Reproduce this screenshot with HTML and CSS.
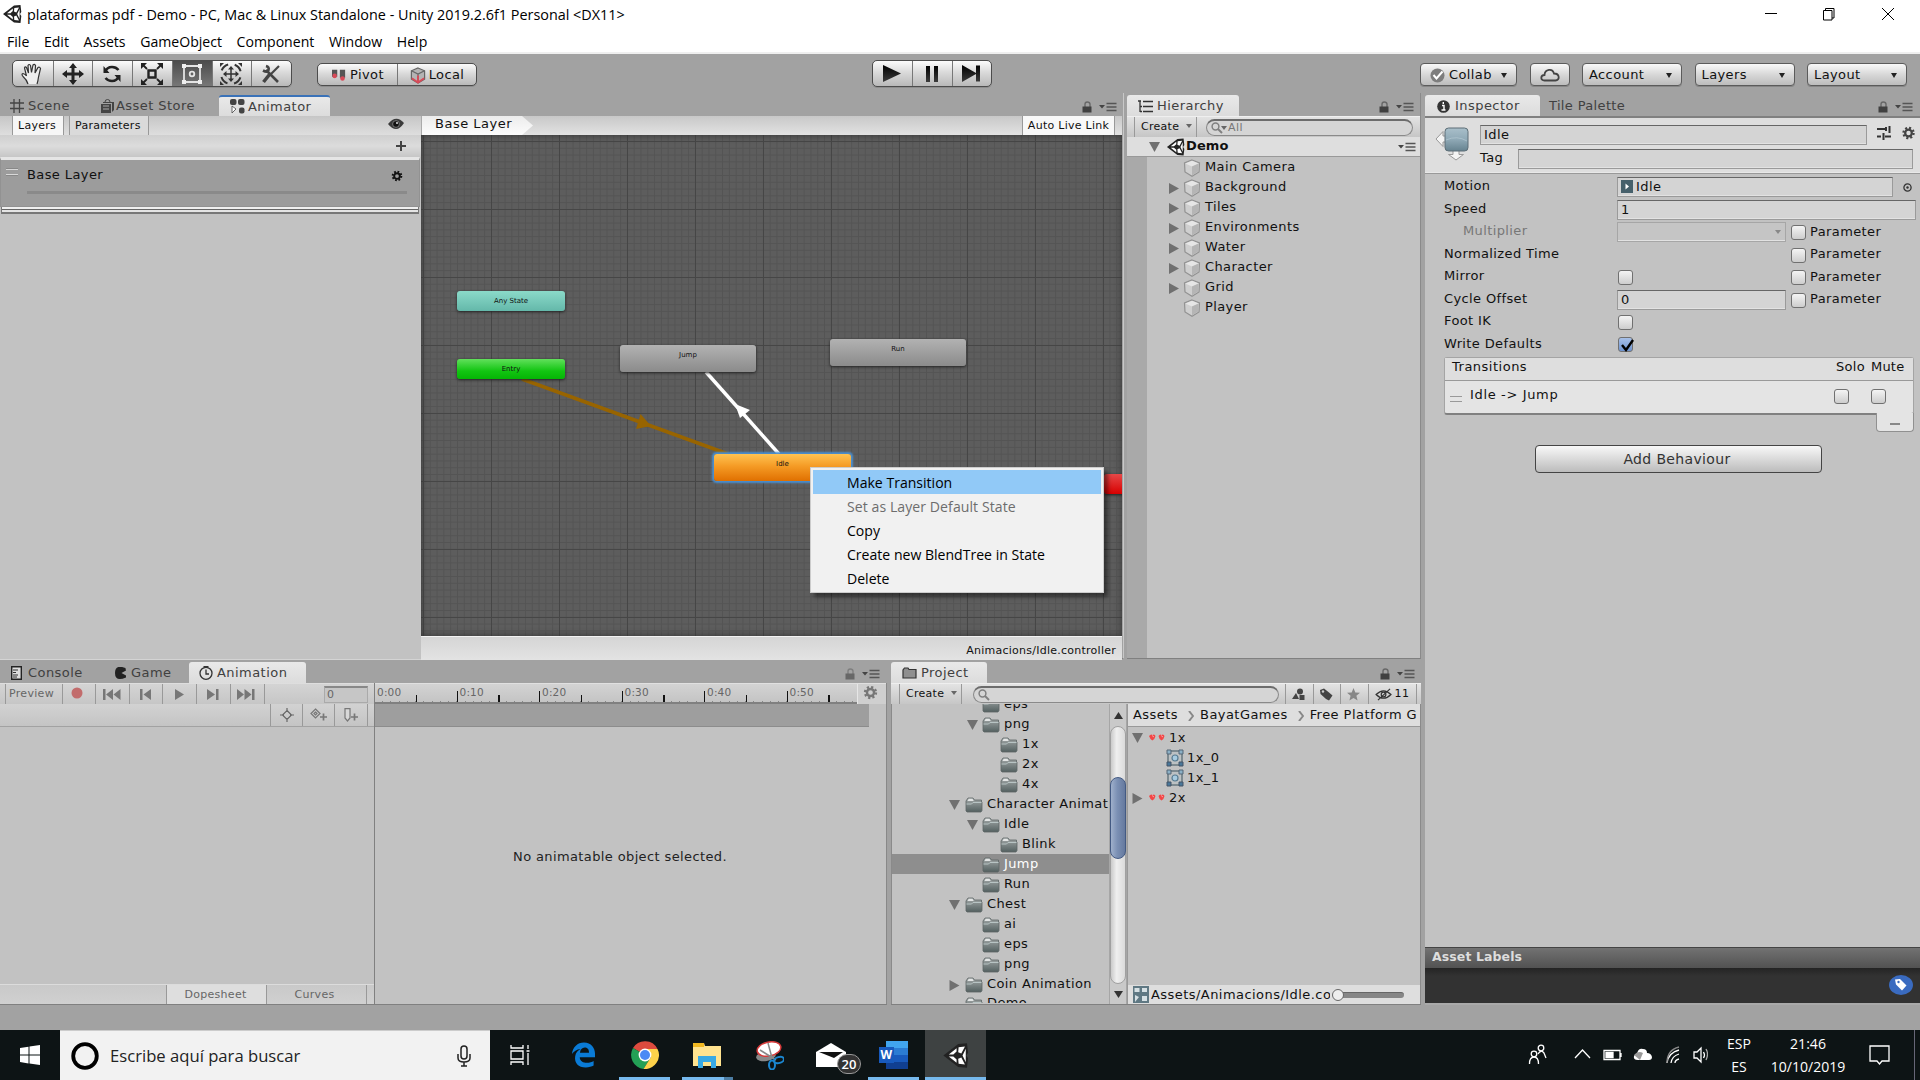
FILE: index.html
```html
<!DOCTYPE html>
<html lang="es">
<head>
<meta charset="utf-8">
<title>Unity</title>
<link rel="stylesheet" href="styles.css">
</head>
<body>
<svg class="defs" width="0" height="0">
  <defs>
    <linearGradient id="gFolder" x1="0" y1="0" x2="0" y2="1"><stop offset="0" stop-color="#a4a9a9"/><stop offset="1" stop-color="#536060"/></linearGradient>
    <linearGradient id="gState" x1="0" y1="0" x2="0" y2="1"><stop offset="0" stop-color="#a9bfca"/><stop offset=".5" stop-color="#8fa9b6"/><stop offset="1" stop-color="#66828f"/></linearGradient>
    <linearGradient id="gPlay" x1="0" y1="0" x2="0" y2="1"><stop offset="0" stop-color="#000"/><stop offset="1" stop-color="#3c3c3c"/></linearGradient>
  </defs>
  <symbol id="unity" viewBox="0 0 20 20"><path d="M1 10 12 1.5 18.5 1 19.3 8 18 10 19.3 12 18.5 19 12 18.5Z" fill="#222"/><path d="M5 9.2 10.8 4.6V7L8.4 9.2ZM5 10.8 10.8 15.4V13L8.4 10.8ZM12.3 3.9 17 3.4 14.3 8.6 12 7.6ZM12.3 16.1 17 16.6 14.3 11.4 12 12.4ZM17.6 5 15.2 10 17.6 15Z" fill="#fff"/></symbol>
  <symbol id="lock" viewBox="0 0 10 12"><path d="M3 6V3.2C3 1.8 3.9 1 5.2 1S8 1.8 8 3.2V6" fill="none" stroke="#686868" stroke-width="1.4"/><rect x=".5" y="5.5" width="9" height="6" fill="#404040"/></symbol>
  <symbol id="opts" viewBox="0 0 18 10"><path d="M0 3h6L3 6.5Z" fill="#444"/><path d="M7.5 1.5h10M7.5 5h10M7.5 8.5h10" stroke="#555" stroke-width="1.6"/></symbol>
  <symbol id="cube" viewBox="0 0 18 18"><path d="M9 1 16.5 4 16 13 9 17.3 2 13 1.5 4Z" fill="#cfcfcf" stroke="#929292" stroke-width="1.2"/><path d="M9 1.8 15.6 4.5 9 7.5 2.4 4.5Z" fill="#e6e6e6"/><path d="M9 7.5 15.6 4.5 15.2 12.5 9 16.5Z" fill="#b5b5b5"/></symbol>
  <symbol id="folder" viewBox="0 0 18 16"><path d="M1 14V4L3 1h5l1.5 2H16.5v2H17v8.5l-1 1.5H2Z" fill="url(#gFolder)" stroke="#5d6666" stroke-width=".8"/><path d="M2.5 4 3.7 1.8h3.8L8.7 4Z" fill="#e3e5e5"/><path d="M1.5 7h5L8 5.5h8.5" fill="none" stroke="#b8c4c4" stroke-width="1"/></symbol>
  <symbol id="down" viewBox="0 0 11 10"><path d="M0 0h11L5.5 10Z" fill="#707070"/></symbol>
  <symbol id="right" viewBox="0 0 10 11"><path d="M0 0v11L10 5.5Z" fill="#707070"/></symbol>
  <symbol id="sprite" viewBox="0 0 18 18"><rect x="2" y="2" width="14" height="14" fill="#bcc1c3" stroke="#7d8a90" stroke-width="2"/><path d="M1 1h4v4H1ZM13 1h4v4h-4Z" fill="#8bb0c6" stroke="#567"/><path d="M1 13h4v4H1ZM13 13h4v4h-4Z" fill="#48779a" stroke="#456"/><circle cx="9" cy="9" r="3" fill="#a7cbe0" stroke="#587c92" stroke-width="1.2"/></symbol>
  <symbol id="hearts" viewBox="0 0 16 8"><path d="M0 2Q2-.5 3.5 1 5.5-.5 6.5 2 6 5 3.3 6.500 1 5 0 2ZM9.500 2Q11-.5 12.5 1 14.5-.5 15.500 2 15 5 12.500 6.500 10 5 9.500 2Z" fill="#f24747"/><path d="M3 1.5 5 3M12 1.5 14 3" stroke="#ff9c9c"/></symbol>
  <symbol id="gear" viewBox="0 0 16 16"><circle cx="8" cy="8" r="5.8" fill="none" stroke="currentColor" stroke-width="2.6" stroke-dasharray="2.3 2.25"/><circle cx="8" cy="8" r="3.8" fill="none" stroke="currentColor" stroke-width="2.6"/></symbol>
  <symbol id="search" viewBox="0 0 12 12"><circle cx="4.5" cy="4.5" r="3.4" fill="none" stroke="#808080" stroke-width="1.5"/><path d="m7 7 4 4" stroke="#808080" stroke-width="2"/></symbol>
</svg>

<header class="titlebar">
  <svg class="app" width="20" height="20"><use href="#unity"/></svg>
  <span class="title">plataformas pdf - Demo - PC, Mac &amp; Linux Standalone - Unity 2019.2.6f1 Personal &lt;DX11&gt;</span>
  <svg class="winctl" width="140" height="16" viewBox="0 0 140 16" fill="none" stroke="#000"><path d="M1 7.5h12M59.500 4.500h8.500v9.500h-8.500zM61.500 4V2.500h8.500v9.500H68M118 2l12 12M130 2l-12 12"/></svg>
</header>
<nav class="menubar"><span>File</span><span>Edit</span><span>Assets</span><span>GameObject</span><span>Component</span><span>Window</span><span>Help</span></nav>

<div class="toolbar">
  <div class="btns tools">
    <b><svg width="24" height="24" viewBox="0 0 24 24" fill="#eee" stroke="#333" stroke-width="1.2"><path d="M8 22Q7 18 3 14.500 1 12 3 11.500 5 12 6.500 14L4.500 6Q5 4 6.500 5.500L8.500 11 8 3.500Q9 1.500 10.500 3.500L11.500 10.500 13 3Q14.500 1.500 15.500 3.500L15 11 18 5.500Q19.500 4.500 20.500 6.500L18.500 15Q18 19 17 22"/></svg></b>
    <b><svg width="22" height="22" viewBox="0 0 22 22"><path d="M11 0l4 5h-2.500v4.500H17V7l5 4-5 4v-2.500h-4.500V17H15l-4 5-4-5h2.500v-4.500H5V15l-5-4 5-4v2.500h4.500V5H7Z" fill="#222"/></svg></b>
    <b><svg width="20" height="20" viewBox="0 0 20 20" fill="none" stroke="#222" stroke-width="2.600"><path d="M3 8Q5 3 10 3q4 0 6.500 3M17 12q-2 5-7 5-4 0-6.500-3"/><path d="M1.500 2v7h6ZM18.500 18v-7h-6Z" fill="#222" stroke="none"/></svg></b>
    <b><svg width="22" height="22" viewBox="0 0 22 22" fill="none" stroke="#222" stroke-width="1.800"><path d="M7.500 7.500h7v7h-7z" stroke-width="2.400"/><path d="M1 1l5 5M21 1l-5 5M1 21l5-5M21 21l-5-5" /><path d="M0 0h6L0 6ZM22 0h-6l6 6ZM0 22h6l-6-6ZM22 22h-6l6-6Z" fill="#222" stroke="none"/></svg></b>
    <b class="on"><svg width="22" height="22" viewBox="0 0 22 22" fill="none" stroke="#e4e4e4" stroke-width="1.800"><path d="M3 3h16v16H3z"/><circle cx="11" cy="11" r="2.300"/><path d="M1 1h4v4H1zM17 1h4v4h-4zM1 17h4v4H1zM17 17h4v4h-4z" fill="#eee" stroke="none"/></svg></b>
    <b><svg width="24" height="24" viewBox="0 0 24 24" fill="none" stroke="#333" stroke-width="2"><path d="M12 5v14M5 12h14" stroke-width="1.500"/><path d="M12 4l3 3.500H9ZM12 20l3-3.500H9ZM4 12l3.500-3v6ZM20 12l-3.500-3v6Z" fill="#333" stroke="none"/><circle cx="12" cy="12" r="10" stroke-dasharray="9 6.700" stroke-dashoffset="-3.500"/><path d="M1 1h4L1 5ZM23 1h-4l4 4ZM1 23h4l-4-4ZM23 23h-4l4-4Z" fill="#333" stroke="none"/></svg></b>
    <b><svg width="20" height="20" viewBox="0 0 20 20" fill="none" stroke="#444" stroke-width="3"><path d="M5 6l12 12M2 6.500Q6.500 9 7.500 6T5 2" stroke-width="2.600"/><path d="M18 2l-8 8" stroke-width="2.200"/><path d="M8.500 10.500 2.500 18" stroke-width="3.500"/></svg></b>
  </div>
  <div class="btns pivot">
    <b><svg width="16" height="14" viewBox="0 0 18 16"><path d="M1 2h6v8H1ZM10 2h6v9h-6Z" fill="#555"/><circle cx="4" cy="9" r="2.600" fill="#d84a58"/><circle cx="13" cy="12" r="2.600" fill="#d84a58"/></svg>Pivot</b>
    <b><svg width="16" height="17" viewBox="0 0 17 18" stroke="#666" stroke-width="1.300"><path d="M8.500 1 15.500 4v9L8.500 17 1.500 13V4Z" fill="#b4b4b4"/><path d="M1.500 4 8.500 7.500 15.500 4M8.500 7v10" fill="none"/><path d="m2 12 6.500 4.500L15 12M8.500 9v7" fill="none" stroke="#d84a58" stroke-width="2"/></svg>Local</b>
  </div>
  <div class="btns play">
    <b><svg width="18" height="17"><path d="M0 0v17L18 8.500Z" fill="url(#gPlay)"/></svg></b>
    <b><svg width="12" height="16"><path d="M0 0h4v16H0ZM8 0h4v16H8Z" fill="url(#gPlay)"/></svg></b>
    <b><svg width="18" height="17"><path d="M0 0v17L14 9V16.500h4V.5h-4V8Z" fill="url(#gPlay)"/></svg></b>
  </div>
  <div class="drops">
    <div class="drop collab"><svg width="15" height="15" viewBox="0 0 15 15"><circle cx="7.500" cy="7.500" r="7" fill="#7d7d7d"/><path d="m3.500 7 3 3.500 6-7" fill="none" stroke="#fff" stroke-width="2"/></svg>Collab<i></i></div>
    <div class="drop cloud"><svg width="20" height="14" viewBox="0 0 20 14"><path d="M4.500 12.500C0 12.500.5 7 4.500 7 5 1 12.500 0 14 5.500c6 0 6 7 1.500 7Z" fill="none" stroke="#444" stroke-width="1.800"/></svg></div>
    <div class="drop">Account<i></i></div>
    <div class="drop">Layers<i></i></div>
    <div class="drop">Layout<i></i></div>
  </div>
</div>

<main class="work">
  <div class="stack">
    <div class="rowtop">
      <section class="panel animator">
        <div class="tabs">
          <div class="tab t-scene"><svg width="14" height="14" viewBox="0 0 14 14" stroke="#444" stroke-width="1.300"><path d="M4 0v14M9.500 0v14M0 4h14M0 9.500h14"/></svg>Scene</div>
          <div class="tab t-store"><svg width="15" height="14" viewBox="0 0 15 14"><path d="M1 5h10v9H1ZM3 3h11v8l-2 2V4H3Z" fill="#444"/><path d="M5 3q0-2.500 2.500-2.500T10 3" fill="none" stroke="#444"/><path d="M3 7h6M3 10h6" stroke="#aaa"/></svg>Asset Store</div>
          <div class="tab active focus t-animator"><svg width="15" height="15" viewBox="0 0 15 15" fill="#444"><rect width="6.500" height="6" rx="2"/><rect x="8" width="6.500" height="6" rx="2"/><rect x="9" y="8.500" width="5.500" height="6" rx="2"/><path d="M2 7v7l4-4Z" fill="#fff" stroke="#444" stroke-width=".8"/></svg>Animator</div>
          <div class="ctl"><svg width="10" height="12"><use href="#lock"/></svg><svg width="18" height="10"><use href="#opts"/></svg></div>
        </div>
        <div class="strip">
          <div class="sub">
            <span class="s1">Layers</span><span class="s2">Parameters</span>
            <svg width="16" height="12" viewBox="0 0 16 12"><path d="M0 6Q8-4 16 5 12 11 8 11T0 6Z" fill="#3a3a3a"/><circle cx="8" cy="6" r="3.400" fill="#111" stroke="#999" stroke-width=".7"/><circle cx="9" cy="5" r="1" fill="#ddd"/></svg>
          </div>
          <div class="path"><span class="crumb">Base Layer</span><span class="auto">Auto Live Link</span></div>
        </div>
        <div class="split">
          <aside class="layers">
            <div class="add"><svg width="10" height="10" viewBox="0 0 10 10"><path d="M5 0v10M0 5h10" stroke="#444" stroke-width="2"/></svg></div>
            <div class="layer">
              <div class="lrow"><i class="grip"></i><span>Base Layer</span><svg width="12" height="12" color="#111"><use href="#gear"/></svg></div>
              <div class="weight"></div>
            </div>
            <div class="layend"></div>
          </aside>
          <div class="graph">
            <div class="canvas">
              <svg class="edges" width="701" height="500"><path d="M101 244 307 319" stroke="#986400" stroke-width="3.500"/><path d="M230 291 215 294 219.500 279Z" fill="#986400"/><path d="M285 237 358 319" stroke="#fff" stroke-width="3.500"/><path d="M314 269 329 275 319 283Z" fill="#fff"/></svg>
              <div class="node any">Any State</div><div class="node entry">Entry</div><div class="node jump">Jump</div><div class="node run">Run</div><div class="node idle">Idle</div><div class="node exit"></div>
            </div>
            <div class="status">Animacions/Idle.controller</div>
          </div>
        </div>
      </section>

      <section class="panel hierarchy">
        <div class="tabs">
          <div class="tab active t-hier"><svg width="15" height="13" viewBox="0 0 15 13" stroke="#333" stroke-width="1.300"><path d="M0 1h3M5 1.500h10M5 6.500h10M5 11.500h10M2 1v11M2 6.500h2M2 11.500h2"/></svg>Hierarchy</div>
          <div class="ctl"><svg width="10" height="12"><use href="#lock"/></svg><svg width="18" height="10"><use href="#opts"/></svg></div>
        </div>
        <div class="ptool"><span class="create">Create<i></i></span><span class="find"><svg width="12" height="12"><use href="#search"/></svg><i></i>All</span></div>
        <div class="scene"><svg width="11" height="10"><use href="#down"/></svg><svg width="19" height="20"><use href="#unity"/></svg><strong>Demo</strong><svg class="end" width="18" height="10"><use href="#opts"/></svg></div>
        <div class="objects">
          <div class="obj leaf"><svg width="18" height="18"><use href="#cube"/></svg>Main Camera</div>
          <div class="obj"><svg width="10" height="11"><use href="#right"/></svg><svg width="18" height="18"><use href="#cube"/></svg>Background</div>
          <div class="obj"><svg width="10" height="11"><use href="#right"/></svg><svg width="18" height="18"><use href="#cube"/></svg>Tiles</div>
          <div class="obj"><svg width="10" height="11"><use href="#right"/></svg><svg width="18" height="18"><use href="#cube"/></svg>Environments</div>
          <div class="obj"><svg width="10" height="11"><use href="#right"/></svg><svg width="18" height="18"><use href="#cube"/></svg>Water</div>
          <div class="obj"><svg width="10" height="11"><use href="#right"/></svg><svg width="18" height="18"><use href="#cube"/></svg>Character</div>
          <div class="obj"><svg width="10" height="11"><use href="#right"/></svg><svg width="18" height="18"><use href="#cube"/></svg>Grid</div>
          <div class="obj leaf"><svg width="18" height="18"><use href="#cube"/></svg>Player</div>
        </div>
      </section>
    </div>

    <div class="rowbot">
      <section class="panel animation">
        <div class="tabs">
          <div class="tab t-console"><svg width="11" height="14" viewBox="0 0 11 14"><path d="M.7.7h9.600v12.600H.7Z" fill="#ddd" stroke="#222" stroke-width="1.400"/><path d="M2 4h5M2 6.500h3M2 9h5M2 11h4" stroke="#333"/></svg>Console</div>
          <div class="tab t-game"><svg width="11" height="12" viewBox="0 0 11 12"><path d="M10.500 1.500 11 3.500 6.500 6 11 8.500v2Q0 15 0 6T10.500 1Z" fill="#222"/></svg>Game</div>
          <div class="tab active t-anim"><svg width="14" height="14" viewBox="0 0 14 14" fill="none" stroke="#333" stroke-width="1.300"><circle cx="7" cy="7.300" r="6"/><path d="M7 3.500V8h3M4.500.7h5"/></svg>Animation</div>
          <div class="ctl dim"><svg width="10" height="12"><use href="#lock"/></svg><svg width="18" height="10"><use href="#opts"/></svg></div>
        </div>
        <div class="asplit">
          <div class="aleft">
            <div class="atools">
              <span class="a0">Preview</span><span class="a1"><svg width="12" height="12"><circle cx="6" cy="6" r="5.500" fill="#c26c6c"/></svg></span>
              <span><svg width="18" height="11" viewBox="0 0 18 11"><path d="M0 0h2.500v11H0ZM10 0v11L3 5.500ZM17.500 0v11l-7-5.500Z"/></svg></span>
              <span><svg width="12" height="11"><path d="M0 0h2.500v11H0ZM11 0v11L3.500 5.500Z"/></svg></span>
              <span><svg width="9" height="11"><path d="M0 0v11L9 5.500Z"/></svg></span>
              <span><svg width="12" height="11"><path d="M9 0h2.500v11H9ZM0 0v11L8 5.500Z"/></svg></span>
              <span><svg width="18" height="11"><path d="M15 0h2.500v11H15ZM0 0v11L7 5.500ZM7.500 0v11l7-5.500Z"/></svg></span>
              <em>0</em>
            </div>
            <div class="keys">
              <span><svg width="14" height="14" viewBox="0 0 14 14" fill="none" stroke="#666" stroke-width="1.200"><path d="M7 2.500 11.500 7 7 11.500 2.500 7ZM7 0v4M7 10v4M0 7h4M10 7h4"/></svg></span>
              <span><svg width="17" height="14" viewBox="0 0 17 14" fill="none" stroke="#777" stroke-width="1.200"><path d="M5.500 1 10 5.500 5.500 10 1 5.500Z"/><path d="M5.500 4 7 5.500 5.500 7 4 5.500Z"/><path d="M13.500 5.500v7M10 9h7" stroke-width="1.700"/></svg></span>
              <span><svg width="14" height="14" viewBox="0 0 14 14" fill="none" stroke="#777" stroke-width="1.200"><path d="M1 .7h5V10l-2.500 3L1 10Z" fill="#d8d8d8"/><path d="M10.500 5.500v7M7 9h7" stroke-width="1.700"/></svg></span>
            </div>
            <div class="modes"><span class="dope">Dopesheet</span><span class="curves">Curves</span></div>
          </div>
          <div class="aright">
            <div class="ruler"><span>0:00</span><span>0:10</span><span>0:20</span><span>0:30</span><span>0:40</span><span>0:50</span><div class="rgear"><svg width="15" height="15" color="#777"><use href="#gear"/></svg></div></div>
            <div class="dark"></div>
            <div class="none">No animatable object selected.</div>
          </div>
        </div>
      </section>

      <section class="panel project">
        <div class="tabs">
          <div class="tab active t-proj"><svg width="15" height="12" viewBox="0 0 15 12"><path d="M1 11V3L2.500 1H6l1 1.500h7V11Z" fill="#8f8f8f" stroke="#333" stroke-width="1.200"/></svg>Project</div>
          <div class="ctl"><svg width="10" height="12"><use href="#lock"/></svg><svg width="18" height="10"><use href="#opts"/></svg></div>
        </div>
        <div class="ptool"><span class="create">Create<i></i></span><span class="find"><svg width="12" height="12"><use href="#search"/></svg></span>
          <div class="filters">
            <span><svg width="13" height="12" viewBox="0 0 13 12" fill="#444"><path d="M0 11 4 5l3 6Z"/><circle cx="8" cy="3.500" r="3"/><path d="M7.500 7h5v5h-5Z"/></svg></span>
            <span><svg width="14" height="13" viewBox="0 0 14 13" fill="#444"><path d="M1 2 5 .5l5 4 3.500 3L10 12.500 7 11 1.500 6Z"/><circle cx="4" cy="3.500" r="1.200" fill="#ccc"/></svg></span>
            <span><svg width="13" height="13" viewBox="0 0 13 13"><path d="m6.500 0 1.800 4.400 4.700.4-3.600 3 1.200 4.700-4.100-2.500-4.100 2.500 1.200-4.700-3.600-3 4.700-.4Z" fill="#878787"/></svg></span>
            <span class="hid"><svg width="18" height="13" viewBox="0 0 19 14" fill="none" stroke="#333" stroke-width="1.300"><path d="M1 7Q9-1 17 7 9 15 1 7ZM3 13 16 1"/><circle cx="9" cy="7" r="2.500"/></svg>11</span>
          </div>
        </div>
        <div class="psplit">
          <div class="tree">
            <div class="it l2"><svg width="18" height="16"><use href="#folder"/></svg>eps</div>
            <div class="it l2 open"><svg class="ar" width="11" height="10"><use href="#down"/></svg><svg width="18" height="16"><use href="#folder"/></svg>png</div>
            <div class="it l3"><svg width="18" height="16"><use href="#folder"/></svg>1x</div>
            <div class="it l3"><svg width="18" height="16"><use href="#folder"/></svg>2x</div>
            <div class="it l3"><svg width="18" height="16"><use href="#folder"/></svg>4x</div>
            <div class="it l1 open"><svg class="ar" width="11" height="10"><use href="#down"/></svg><svg width="18" height="16"><use href="#folder"/></svg>Character Animat</div>
            <div class="it l2 open"><svg class="ar" width="11" height="10"><use href="#down"/></svg><svg width="18" height="16"><use href="#folder"/></svg>Idle</div>
            <div class="it l3"><svg width="18" height="16"><use href="#folder"/></svg>Blink</div>
            <div class="it l2 sel"><svg width="18" height="16"><use href="#folder"/></svg>Jump</div>
            <div class="it l2"><svg width="18" height="16"><use href="#folder"/></svg>Run</div>
            <div class="it l1 open"><svg class="ar" width="11" height="10"><use href="#down"/></svg><svg width="18" height="16"><use href="#folder"/></svg>Chest</div>
            <div class="it l2"><svg width="18" height="16"><use href="#folder"/></svg>ai</div>
            <div class="it l2"><svg width="18" height="16"><use href="#folder"/></svg>eps</div>
            <div class="it l2"><svg width="18" height="16"><use href="#folder"/></svg>png</div>
            <div class="it l1 open"><svg class="ar" width="11" height="11"><use href="#right"/></svg><svg width="18" height="16"><use href="#folder"/></svg>Coin Animation</div>
            <div class="it l1"><svg width="18" height="16"><use href="#folder"/></svg>Demo</div>
          </div>
          <div class="bar"><svg width="9" height="7"><path d="M0 7h9L4.500 0Z" fill="#333"/></svg><div class="trough"><div class="thumb"></div></div><svg width="9" height="7"><path d="M0 0h9L4.500 7Z" fill="#333"/></svg></div>
          <div class="files">
            <div class="crumbs">Assets<svg width="6" height="10" viewBox="0 0 6 10"><path d="m1 0 4 5-4 5" fill="none" stroke="#888" stroke-width="2"/></svg>BayatGames<svg width="6" height="10" viewBox="0 0 6 10"><path d="m1 0 4 5-4 5" fill="none" stroke="#888" stroke-width="2"/></svg>Free Platform G</div>
            <div class="list">
              <div class="f"><svg class="fa" width="11" height="10"><use href="#down"/></svg><svg class="fh" width="16" height="8"><use href="#hearts"/></svg>1x</div>
              <div class="f child"><svg width="18" height="18"><use href="#sprite"/></svg>1x_0</div>
              <div class="f child"><svg width="18" height="18"><use href="#sprite"/></svg>1x_1</div>
              <div class="f"><svg class="fa" width="11" height="11"><use href="#right"/></svg><svg class="fh" width="16" height="8"><use href="#hearts"/></svg>2x</div>
            </div>
            <div class="foot"><svg width="16" height="17" viewBox="0 0 16 17"><path d="M0 0h16v17H0Z" fill="#5f7883"/><path d="M1.500 2h5v4h-5ZM9 2h5v4H9ZM9 10h5v5H9ZM2 9v7l4-5Z" fill="#d6e0e4"/></svg><span>Assets/Animacions/Idle.controller</span><div class="zoomer"><b></b></div></div>
          </div>
        </div>
      </section>
    </div>
  </div>

  <section class="panel inspector">
    <div class="tabs">
      <div class="tab active t-insp"><svg width="13" height="13" viewBox="0 0 13 13"><circle cx="6.500" cy="6.500" r="6.300" fill="#333"/><path d="M5 5.500h2V10M6.300 2v2M4.500 10h4" stroke="#fff" stroke-width="1.400" fill="none"/></svg>Inspector</div>
      <div class="tab t-tile">Tile Palette</div>
      <div class="ctl"><svg width="10" height="12"><use href="#lock"/></svg><svg width="18" height="10"><use href="#opts"/></svg></div>
    </div>
    <div class="ihead">
      <svg width="34" height="34" viewBox="0 0 34 34"><path d="M1 12 8 4.500V9h4v6H8v4.500ZM21 33l-7.500-5.500H18V21h6v6.500h4.500Z" fill="#f4f4f4" stroke="#999"/><rect x="10" y="1" width="23" height="23" rx="3.500" fill="url(#gState)" stroke="#5c6d76"/><path d="M11 13q11-5 21 1" fill="none" stroke="#b9cdd7" opacity=".6"/></svg>
      <div class="iform">
        <div class="irow"><div class="field name">Idle</div><svg width="14" height="14" viewBox="0 0 14 14" stroke="#333" stroke-width="2" fill="none"><path d="M0 3h9M12.500 0v7M0 10.500h4M6.500 7v7M8 10.500h6M9 1v4"/></svg><svg width="15" height="14" color="#444"><use href="#gear"/></svg></div>
        <div class="irow"><span>Tag</span><div class="field tag"></div></div>
      </div>
    </div>
    <div class="props">
      <div class="p"><label>Motion</label><div class="field w1"><svg width="12" height="13" viewBox="0 0 12 13"><path d="M0 0h12v13H0Z" fill="#46606b"/><path d="M4.500 3.500v6L8 6.500Z" fill="#fff"/></svg>Idle</div><svg class="pick" width="9" height="9"><circle cx="4.500" cy="4.500" r="3.600" fill="none" stroke="#333" stroke-width="1.300"/><circle cx="4.500" cy="4.500" r="1.200" fill="#333"/></svg></div>
      <div class="p"><label>Speed</label><div class="field w2">1</div></div>
      <div class="p"><label class="ind">Multiplier</label><div class="field w3 off"><i></i></div><div class="par"><u></u>Parameter</div></div>
      <div class="p"><label>Normalized Time</label><div class="par"><u></u>Parameter</div></div>
      <div class="p"><label>Mirror</label><u></u><div class="par"><u></u>Parameter</div></div>
      <div class="p"><label>Cycle Offset</label><div class="field w3">0</div><div class="par"><u></u>Parameter</div></div>
      <div class="p"><label>Foot IK</label><u></u></div>
      <div class="p"><label>Write Defaults</label><u class="ck"><svg width="16" height="16" viewBox="0 0 16 16"><path d="m3 7 4 5 7-10" fill="none" stroke="#000" stroke-width="2.400"/></svg></u></div>
    </div>
    <div class="trans">
      <div class="th"><span>Transitions</span><span class="solo">Solo</span><span class="mute">Mute</span></div>
      <div class="tr"><i class="grip"></i><span>Idle -&gt; Jump</span><u></u><u></u></div>
    </div>
    <div class="minus"><i></i></div>
    <div class="addb">Add Behaviour</div>
    <div class="assetl">Asset Labels</div>
    <div class="assetb"><svg width="24" height="20" viewBox="0 0 24 20"><ellipse cx="12" cy="10" rx="12" ry="10" fill="#3a6bc0"/><path d="M6 4.500 11 4l6.500 6.500-4.500 5L7 9.500Z" fill="#fff"/><circle cx="9.500" cy="7" r="1.200" fill="#3a6bc0"/></svg></div>
  </section>
</main>

<div class="context">
  <div class="hl">Make Transition</div><div class="no">Set as Layer Default State</div><div>Copy</div><div>Create new BlendTree in State</div><div>Delete</div>
</div>

<footer class="taskbar">
  <div class="start"><svg width="20" height="20" viewBox="0 0 20 20" fill="#fff"><path d="M0 3 8.500 1.700V9.600H0ZM9.500 1.500 20 0V9.600H9.500ZM0 10.500h8.500v7.900L0 17ZM9.500 10.500H20V20L9.500 18.500Z"/></svg></div>
  <div class="cortana"><svg width="28" height="28"><circle cx="14" cy="14" r="11.800" fill="none" stroke="#000" stroke-width="3.800"/></svg><span>Escribe aquí para buscar</span><svg width="16" height="22" viewBox="0 0 16 22" fill="none" stroke="#222" stroke-width="1.500"><rect x="5" y="1" width="6" height="13" rx="3"/><path d="M2 9v4q0 4 6 4t6-4V9M8 17v4M5 21h6"/></svg></div>
  <div class="apps">
    <div><svg width="21" height="20" viewBox="0 0 21 20" fill="none" stroke="#fff" stroke-width="1.300"><path d="M1 0v3h12V0M1 20v-3h12v3M1 6h12v8H1ZM18 0v4M18 8v12M16.500 6h3"/></svg></div>
    <div><svg width="24" height="26" viewBox="0 0 26 27"><path d="M1 12.500C2 5 7 0 14 0c8 0 12 6 12 12v4H9.500c0 4.500 4 6 7.500 6 3 0 6-1 7.500-2v5c-2 1.300-5 2-8.500 2C8 27 3.500 22 4.500 15c.6-4 3-6.500 6-8C6 7.500 3 9.500 1 12.500ZM9.700 11h9.800c0-4-2-5.500-4.600-5.500-3 0-4.800 2.300-5.200 5.500Z" fill="#0a7bd6"/></svg></div>
    <div class="live"><svg width="28" height="28" viewBox="0 0 28 28"><path d="M14 14 2 7A14 14 0 0 1 26.500 8H14Z" fill="#dd4b3e"/><path d="M14 14 2 7A14 14 0 0 0 12.500 28l7-11Z" fill="#23a055"/><path d="M14 8h12.500A14 14 0 0 1 12.500 28L20 16Z" fill="#fdd24a"/><circle cx="14" cy="14" r="6.400" fill="#fff"/><circle cx="14" cy="14" r="5" fill="#4a8af4"/></svg></div>
    <div class="live multi"><svg width="28" height="25" viewBox="0 0 28 25"><path d="M0 3V0h11l1 3h16v20H0Z" fill="#ffe38f"/><path d="M0 0h11v4H0Z" fill="#f2b921"/><path d="M5 13h18v12h-5v-6h-8v6H5Z" fill="#38a9e4"/></svg></div>
    <div><svg width="29" height="29" viewBox="0 0 29 29"><ellipse cx="11" cy="15" rx="10" ry="5" fill="#888" transform="rotate(-10 11 15)"/><ellipse cx="14" cy="8" rx="12" ry="7" fill="#fff" stroke="#d63b3b" stroke-width="1.500" transform="rotate(-12 14 8)"/><path d="M13 2l4 15M5 9l16 10" stroke="#888" stroke-width="1.500"/><g fill="none" stroke="#1b86d0" stroke-width="2"><ellipse cx="24" cy="19" rx="5" ry="3" transform="rotate(-15 24 19)"/><ellipse cx="17" cy="24" rx="3" ry="4.500"/></g></svg></div>
    <div class="mail"><svg width="30" height="24" viewBox="0 0 30 24"><path d="M0 9 15 0l15 9v15H0Z" fill="#fff"/><path d="M3 9h24l-9 6Z" fill="#111"/></svg><b>20</b></div>
    <div class="live"><svg width="29" height="28" viewBox="0 0 29 28"><path d="M7 0h22v7H7Z" fill="#41a5ee"/><path d="M7 7h22v7H7Z" fill="#2b7cd3"/><path d="M7 14h22v7H7Z" fill="#185abd"/><path d="M7 21h22v7H7Z" fill="#103f91"/><path d="M0 6h15v16H0Z" fill="#185abd"/><text x="1.500" y="18" class="w">W</text></svg></div>
    <div class="live cur"><svg width="27" height="27"><use href="#unity"/></svg></div>
  </div>
  <div class="tray">
    <svg width="180" height="24" viewBox="0 0 180 24" fill="none" stroke="#fff" stroke-width="1.300"><circle cx="6" cy="11" r="2.800"/><path d="M1.500 21q0-7 4.500-7t4.500 7"/><circle cx="13" cy="5" r="2.800"/><path d="M10 11q3-5 6-1l2 5M47 15l7.500-8 7.500 8M76 7.500h16v9H76ZM93 10v4"/><path d="M78 9.500h7v5h-7Z" fill="#fff"/><path d="M110 17q-5 0-4-4 1-2 3-2 1-6 6-5 4 0 4 4 4 0 5 4 0 3-3 3Z" fill="#fff" stroke="none"/><path d="M106 12q4-5 9-2l-3 7" fill="#999" stroke="none"/><path d="M139 20q1-10 12-13M143 20q1-7 8-9M147 20q0-3 4-4" /><path d="M139 20q0-13 12-16" stroke="#888"/><path d="M166 9h3l4-4v14l-4-4h-3ZM175.500 9q2 3 0 6"/><path d="M178 6q3 5 0 11" stroke="#aaa"/></svg>
    <div class="lang"><span>ESP</span><span>ES</span></div>
    <div class="clock"><span>21:46</span><span>10/10/2019</span></div>
    <svg class="note" width="21" height="20" viewBox="0 0 21 20"><path d="M1 1h19v15h-7l-2.500 3L8 16H1Z" fill="none" stroke="#fff" stroke-width="1.300"/></svg>
    <i class="peek"></i>
  </div>
</footer>
</body>
</html>
```
FILE: styles.css
```css
*{box-sizing:border-box}
body{margin:0;width:1920px;height:1080px;overflow:hidden;background:#a2a2a2;color:#111;display:flex;flex-direction:column;font:13px/20px "DejaVu Sans",sans-serif;letter-spacing:.4px}
svg{flex:none;display:block}
i,em{font-style:normal}
u{text-decoration:none}
.defs{position:absolute}

.titlebar{height:30px;flex:none;background:#fff;display:flex;align-items:center;padding:0 0 2px 2px;color:#000}
.title{font:14.4px "Open Sans",sans-serif;letter-spacing:0;margin-left:5px;white-space:nowrap}
.winctl{margin:0 16px 0 auto}
.menubar{height:24px;flex:none;background:#fff;border-bottom:2px solid #efefef;display:flex;align-items:center;gap:14.600px;padding-left:7px;font:14.100px "Open Sans",sans-serif;letter-spacing:0;color:#000}

.toolbar{height:39px;flex:none;display:flex;align-items:flex-start;padding:6px 13px 0 12px}
.btns{display:flex;border:1px solid #4c4c4c;border-radius:5px;background:linear-gradient(#fbfbfb,#dadada 45%,#b9b9b9);height:27px;box-shadow:0 1px 0 #8d8d8d;overflow:hidden}
.btns b{font-weight:400;width:40px;display:flex;align-items:center;justify-content:center}
.tools b,.play b{padding-right:1px}
.btns b+b{border-left:1px solid #777}
.btns .on{background:linear-gradient(#4c4c4c,#777)}
.tools{width:280px}
.pivot{margin:3px 0 0 25px;height:23px;width:160px}
.pivot b{width:80px;gap:3px;padding-top:1px}
.play{margin-left:395px;width:120px}
.drops{display:flex;margin:3px 0 0 428px;gap:12.500px}
.drop{width:100px;height:23px;flex:none;border:1px solid #5b5b5b;border-radius:4px;background:linear-gradient(#f8f8f8,#d8d8d8 50%,#bcbcbc);box-shadow:0 1px 0 #868686;display:flex;align-items:center;padding:1px 9px 0 6px}
.drop i,.create i,.find i,.off i{border:3.500px solid transparent;border-top:5px solid #222;border-bottom:0;margin-left:auto}
.collab{width:97px;padding-left:9px;gap:4px}
.cloud{width:40px;padding:0;justify-content:center}

.work{flex:none;height:937px;display:flex;align-items:flex-start}
.stack{width:1425px;height:912px}
.rowtop{height:567px;display:flex;gap:3px}
.rowbot{height:345px;display:flex;gap:4px}
.panel{display:flex;flex-direction:column;height:100%}
.rowtop .panel{height:566px}
.rowtop .panel,.rowbot .panel{border-bottom:1px solid #808080}
.animator{width:1124px;border-right:1px solid #c8c8c8}
.hierarchy{width:294px;border-right:1px solid #8a8a8a}
.animation{width:887px}
.project{width:530px}
.tabs{height:23px;flex:none;display:flex;align-items:flex-end}
.tab{height:21px;display:flex;align-items:center;flex:none;color:#404040;white-space:nowrap;padding-top:1px;letter-spacing:.45px}
.tab.active{background:linear-gradient(#e9e9e9,#dcdcdc);border-radius:3px 3px 0 0}
.tab.focus{border-top:2px solid #3a72b8;padding-top:0}
.ctl{margin-left:auto;display:flex;gap:7px;align-items:center;height:19px}
.dim svg:first-child{opacity:.6}
.t-scene{width:100px;padding-left:10px;gap:4px}
.t-store{width:119px;gap:1px}
.t-animator{width:111px;padding-left:11px;gap:3px}
.animator .ctl{padding-right:6px}
.t-hier{width:112px;padding-left:11px;gap:4px}
.hierarchy .ctl,.project .ctl{padding-right:6px}
.t-console{width:115px;padding-left:11px;gap:6px}
.t-game{width:74px;gap:5px}
.t-anim{width:117px;padding-left:10px;gap:4px}
.animation .ctl{padding-right:7px}
.t-proj{width:96px;padding-left:11px;gap:4px}
.t-insp{width:115px;padding-left:12px;gap:5px}
.t-tile{padding-left:9px;letter-spacing:.35px}
.inspector .ctl{padding-right:7px}

.strip{height:19px;flex:none;display:flex;font-size:11px;letter-spacing:.27px;margin-right:1px;box-shadow:0 1px 0 #f2f2f2 inset}
.sub{width:421px;background:linear-gradient(#c6c6c6,#dedede);display:flex;align-items:center;padding-left:12px}
.sub span{height:19px;line-height:19px;border:1px solid #999;border-width:0 1px}
.s1{width:52px;background:#f6f6f6;padding-left:5px}
.s2{width:80px;margin-left:5px;background:#dadada;padding-left:5px}
.sub svg{margin:-3px 0 0 239px}
.path{flex:1;display:flex;justify-content:space-between;background:linear-gradient(#c8c8c8,#e2e2e2);border-left:1px solid #aaa}
.crumb{width:111px;height:19px;line-height:16px;font-size:13px;letter-spacing:.5px;padding-left:13px;background:linear-gradient(#ececec,#fcfcfc);clip-path:polygon(0 0,100px 0,100% 50%,100px 100%,0 100%)}
.auto{width:93px;margin-right:7px;background:#f8f8f8;border:1px solid #999;border-width:0 1px;line-height:19px;text-align:center;white-space:nowrap}
.split{flex:1;display:flex;margin-right:1px}
.layers{width:421px;background:#c2c2c2;border-bottom:1px solid #d4d4d4}
.add{height:22px;background:linear-gradient(#cfcfcf,#dcdcdc 50%,#c6c6c6);display:flex;justify-content:flex-end;align-items:center;padding-right:15px}
.layer{height:50px;background:#9c9c9c;border:1px solid #929292;border-top:3px solid #e5e5e5;margin-right:1px}
.lrow{display:flex;height:28px;align-items:center;padding-left:5px}
.lrow span{flex:1;margin-left:9px;padding-top:1px}
.lrow svg{margin:4px 16px 0 0}
.grip{width:12px;height:6px;border:1px solid #d8d8d8;border-width:1px 0;box-shadow:0 -1px 0 #888,0 1px 0 #888;margin-top:-4px}
.weight{height:3px;background:#8a8a8a;margin:3px 12px 0 26px}
.layend{height:7px;margin:0 2px 0 1px;border:1px solid #777;border-width:0 1px 2px;background:linear-gradient(#f0f0f0 2px,#666 2px,#666 3px,#e4e4e4 3px)}
.graph{flex:1;display:flex;flex-direction:column}
.canvas{position:relative;height:501px;overflow:hidden;box-shadow:0 0 7px #333 inset;background-color:#5d5d5d;background-image:linear-gradient(90deg,#464646 1px,transparent 1px),linear-gradient(#464646 1px,transparent 1px),linear-gradient(90deg,#545454 1px,transparent 1px),linear-gradient(#545454 1px,transparent 1px);background-size:68px 68px,68px 68px,6.8px 6.8px,6.8px 6.8px;background-position:2px 6px}
.edges{position:absolute;left:0;top:0}
.node{position:absolute;border-radius:3px;box-shadow:0 1px 3px #222;font-size:7px;line-height:10px;letter-spacing:0;text-align:center;padding-top:4.500px;color:#111}
.any,.entry{left:36px;width:108px;height:20px}
.any{top:156px;background:linear-gradient(#8bdac9,#64b8aa)}
.entry{top:224px;background:linear-gradient(#61e05b,#12c512 60%,#05b505)}
.jump,.run,.idle{width:136px;height:27px}
.jump,.run{background:linear-gradient(#b2b2b2,#8b8b8b)}
.jump{left:199px;top:210px}
.run{left:409px;top:204px}
.idle{left:293px;top:319px;width:137px;background:linear-gradient(#ffc352,#f59b25 45%,#e07000);box-shadow:0 0 2px 1.500px #4a8fd0}
.exit{left:683px;top:339px;width:108px;height:20px;background:linear-gradient(#e64848,#d80000)}
.status{flex:1;background:linear-gradient(#d5d5d5,#e3e3e3);border-top:1px solid #f2f2f2;text-align:right;padding:5px 6px 0 0;font-size:11px;line-height:18px;letter-spacing:.25px}

.ptool{height:21px;flex:none;background:linear-gradient(#e3e3e3,#c6c6c6);border-top:1px solid #efefef;display:flex;align-items:center;padding-left:7px}
.create{width:63px;height:20px;border:1px solid #999;border-width:0 1px;font-size:11px;letter-spacing:.27px;display:flex;align-items:center;padding:0 4px 0 6px}
.create i,.find i{border-width:3px;border-top:4px solid #666;border-bottom:0}
.create i{margin-top:-3px}
.find{height:17px;width:207px;margin-left:9px;border:1px solid #8a8a8a;border-top:2px solid #6c6c6c;border-radius:9px;background:#d5d5d5;display:flex;align-items:center;padding-left:4px;font-size:11px;color:#777}
.find i{margin:0 1px 0 -2px}
.scene{height:20px;flex:none;background:#dedede;border-bottom:1px solid #999;display:flex;align-items:center;padding-left:22px;gap:1px}
.scene svg:nth-child(2){margin-left:5px}
.scene strong{margin-top:-1px;letter-spacing:.1px;font-size:13px}
.scene .end{margin:0 4px 0 auto}
.objects{flex:1;background:#c2c2c2;border-left:20px solid #a9a9a9}
.obj{height:20px;display:flex;align-items:center;padding-left:22px;line-height:18px;padding-bottom:1px}
.obj svg:first-child{margin:3px 4px 0 0}
.obj svg:last-of-type{margin:3px 4px 0 0}
.obj.leaf{padding-left:36px}

.asplit{flex:1;display:flex;background:#c2c2c2;border-right:1px solid #888}
.aleft{width:375px;border-right:1px solid #808080;display:flex;flex-direction:column}
.atools{height:21px;display:flex;align-items:center;background:linear-gradient(#d4d4d4,#c6c6c6);border-top:1px solid #dedede;padding-left:5px;font-size:11px;color:#666}
.atools span{width:33.700px;height:20px;border-left:1px solid #999;display:flex;align-items:center;justify-content:center;fill:#777}
.atools .a0{width:57px;letter-spacing:.3px;padding-right:5px}
.atools .a1{width:33px;padding:0 4px 2px 0}
.atools span:last-of-type{border-right:1px solid #999;width:35px;padding-right:3px}
.atools em{width:44px;height:17px;line-height:14px;margin-left:auto;margin-right:6px;background:#c6c6c6;border:1px solid #aaa;border-top:2px solid #888;padding-left:2px}
.keys{height:23px;display:flex;justify-content:flex-end;background:linear-gradient(#d2d2d2,#c4c4c4);border:1px solid #a2a2a2;border-width:0 0 1px;padding-right:6px}
.keys span{width:32px;border-left:1px solid #999;display:flex;align-items:center;justify-content:center;padding-bottom:1px}
.keys span:last-child{border-right:1px solid #999;width:34px}
.modes{margin-top:auto;height:20px;display:flex;justify-content:flex-end;border-top:1px solid #dcdcdc;background:linear-gradient(#c9c9c9,#d0d0d0);padding-right:7px;font-size:11px;color:#666;line-height:19px;text-align:center;letter-spacing:.3px}
.dope{width:100px;background:#dedede;border-left:1px solid #999;padding-right:2px}
.curves{width:101px;border:1px solid #999;border-width:0 1px;padding-right:4px}
.aright{flex:1;display:flex;flex-direction:column}
.ruler{height:21px;display:flex;position:relative;border-top:1px solid #e0e0e0;border-bottom:2px solid #808080;background:
 repeating-linear-gradient(90deg,transparent 0 81.500px,#111 81.500px 82.500px) 0 100%/100% 11px no-repeat,
 repeating-linear-gradient(90deg,transparent 0 40.500px,#111 40.500px 42px,transparent 42px 82.500px) 0 100%/100% 7px no-repeat,
 repeating-linear-gradient(90deg,transparent 0 7.250px,#888 7.250px 8.250px) 0 100%/100% 1px no-repeat,
 linear-gradient(#d3d3d3,#c4c4c4)}
.ruler span{width:82.500px;padding-left:2px;font-size:10.500px;line-height:16px;color:#666;letter-spacing:.2px;flex:none}
.rgear{position:absolute;right:0;top:0;width:29px;height:20px;background:#cfcfcf;border-left:1px solid #e6e6e6;padding:1px 0 0 5px}
.dark{height:23px;width:494px;background:#9e9e9e;border-bottom:1px solid #8c8c8c}
.none{flex:1;text-align:center;padding:120px 21px 0 0;letter-spacing:.38px;color:#222}

.project .create{margin-left:1px}
.project .find{width:306px;margin-left:11px}
.filters{display:flex;margin-left:6px;height:20px}
.filters span{width:27.500px;border-left:1px solid #999;display:flex;align-items:center;justify-content:center;font-size:11px;padding-right:2px}
.filters .hid{width:49px;gap:2px;border-right:1px solid #999;padding:0}
.psplit{flex:1;min-height:0;display:flex;background:#c2c2c2;border-left:1px solid #8a8a8a;border-right:1px solid #8a8a8a}
.tree{width:217px;height:299px;overflow:hidden;display:flex;flex-direction:column;justify-content:flex-end}
.it{height:20px;flex:none;display:flex;align-items:center;gap:4px;white-space:nowrap;line-height:18px;width:217px;padding-bottom:1px}
.it svg{margin-top:3px}
.tree .it:last-child{height:9px;align-items:flex-start}
.l1{padding-left:73px}.l2{padding-left:90px}.l3{padding-left:108px}
.l1.open{padding-left:57px}.l2.open{padding-left:75px}
.l1 .ar{margin-right:1px}
.sel{background:#8e8e8e;color:#fff}
.bar{width:18px;display:flex;flex-direction:column;align-items:center;justify-content:space-between;padding:8px 0 6px;background:#c9c9c9;border:1px solid #a6a6a6;border-width:0 1px}
.trough{width:16px;height:258px;border-radius:8px;background:linear-gradient(90deg,#cacaca,#efefef 40%,#dadada);border:1px solid #a0a0a0;padding-top:50px}
.thumb{height:82px;margin:0 -1px;border:1px solid #435a83;border-radius:8px;background:linear-gradient(90deg,#9fb0cb,#7b90b4 45%,#65799e)}
.files{flex:1;min-width:0;display:flex;flex-direction:column;border-left:1px solid #999}
.crumbs{height:23px;background:#dedede;border-bottom:1px solid #999;display:flex;align-items:center;padding-left:5px;white-space:nowrap;overflow:hidden;line-height:18px;padding-bottom:1px;letter-spacing:.45px}
.crumbs svg{margin:2px 6px 0 10px}
.list{flex:1;padding-top:1px}
.f{height:20px;display:flex;align-items:center;padding-left:4px}
.fh{margin:0 4px 0 6px}
.child{padding-left:38px;gap:3px}
.foot{height:19px;background:#dedede;display:flex;align-items:center;padding-left:5px}
.foot span{width:179px;margin-left:2px;overflow:hidden;white-space:nowrap;line-height:18px;letter-spacing:.45px}
.zoomer{width:67px;height:6px;margin-left:7px;border-radius:3px;background:#868686;border-top:1px solid #666;display:flex;align-items:center}
.zoomer b{width:12px;height:12px;flex:none;border-radius:6px;background:#eee;border:1px solid #666;margin-left:-5px}

.inspector{width:495px;height:912px;background:#c2c2c2}
.inspector .tabs{background:#a2a2a2}
.ihead{height:58px;background:#dedede;border-top:2px solid #808080;border-bottom:1px solid #999;box-shadow:0 -1px 0 #e8e8e8 inset;display:flex;padding:9px 0 0 10px}
.iform{margin-left:11px;flex:1;margin-top:-2px}
.irow{display:flex;height:22.700px;align-items:flex-start}
.irow span{line-height:20px;width:38px}
.irow svg{margin:1px 0 0 10px}
.field{height:20px;background:#d4d4d4;border:1px solid #9a9a9a;border-top:1.500px solid #666;box-shadow:0 -1px 0 #e2e2e2 inset;display:flex;align-items:center;line-height:17px;padding:0 3px 1px;gap:3px}
.name{width:387px}
.tag{width:395px;margin-top:1px}
.props{padding:2px 0 0 19px}
.p{height:22.500px;display:flex;align-items:center;position:relative}
.p label{width:173px;line-height:20px;margin-top:-2px;letter-spacing:.38px}
.p .ind{padding-left:19px;color:#777}
.w1{width:276px}.w2{width:299px}.w3{width:169px}
.pick{margin-left:10px}
.off{background:#c5c5c5;border-color:#a6a6a6;padding:0 4px 0 0}
.off i{border-width:3px;border-top:4px solid #888;border-bottom:0}
.p .par{position:relative;margin-left:auto;width:129px;display:flex;align-items:center;gap:4px;line-height:18px;margin-top:-1px}
u{width:15px;height:15px;flex:none;border:1px solid #707070;border-radius:3px;background:linear-gradient(#f4f4f4,#cdcdcd);margin-left:1px}
.par u{margin:2px 0 0}
.ck{background:linear-gradient(#a7c0e8,#6f94cf)}
.trans{margin:1px 6px 0 19px;border:1px solid #a4a4a4;border-bottom:2px solid #808080;border-radius:3px;background:#e4e4e4}
.th{height:23px;display:flex;border-bottom:1px solid #999;background:#dedede;padding-left:7px;line-height:18px;letter-spacing:.5px}
.solo{margin-left:auto;margin-right:6px;letter-spacing:.3px}
.mute{width:42px;letter-spacing:.2px}
.tr{height:32px;display:flex;align-items:center;padding:0 27px 2px 5px}
.tr .grip{border-color:#999;box-shadow:none;margin-top:6px}
.tr span{flex:1;padding-left:8px;line-height:18px;margin-top:-3px;letter-spacing:.65px}
.tr u+u{margin-left:22px}
.minus{width:38px;height:19px;margin:-2px 6px 0 auto;background:#e4e4e4;border:1px solid #909090;border-top:0;border-radius:0 0 4px 4px;display:flex;align-items:center;justify-content:center}
.minus i{width:10px;height:2px;background:#888;margin-top:3px}
.addb{width:287px;height:28px;margin:13px 0 0 110px;border:1px solid #444;border-radius:4px;background:linear-gradient(#f8f8f8,#dadada 50%,#bcbcbc);text-align:center;line-height:27px;font-size:14px;letter-spacing:.35px;padding-right:3px;color:#333}
.assetl{height:21px;margin-top:auto;background:linear-gradient(#727272,#525252);border-top:1px solid #444;color:#ddd;font-weight:bold;padding-left:7px;line-height:18px;font-size:12.500px;letter-spacing:.1px}
.assetb{height:37px;flex:none;background:linear-gradient(#242424,#323232 8px);display:flex;justify-content:flex-end;align-items:center;padding:0 7px 2px 0;border-bottom:2px solid #aaa}

.context{position:absolute;left:810px;top:467px;width:294px;height:126px;background:#f1f1f1;border:1px solid #ccc;box-shadow:4px 4px 4px rgba(0,0,0,.45);padding:2px;font:14.07px/26px "Open Sans",sans-serif;letter-spacing:0;color:#000}
.context div{height:24px;padding-left:34px}
.context .hl{background:#91c9f7}
.context .no{color:#6d6d6d;letter-spacing:.07px}

.taskbar{height:50px;flex:none;display:flex;background:#0d1415;font-family:"Open Sans",sans-serif;letter-spacing:0;color:#fff}
.start{width:60px;display:flex;align-items:center;justify-content:center}
.cortana{width:430px;background:#f2f2f2;border-top:1px solid #ccc;display:flex;align-items:center;color:#222;padding:0 18px 0 11px}
.cortana span{font-size:16.650px;margin-left:11px;flex:1}
.apps{display:flex;padding-left:5px}
.apps div{width:51px;margin-right:11.200px;height:50px;display:flex;align-items:center;justify-content:center}
.apps .live{border-bottom:3px solid #76b9ed;padding-top:3px}
.apps .multi{border-image:linear-gradient(90deg,#76b9ed 40px,#4c7da3 40px) 3}
.apps .cur{width:61px;margin:0 0 0 -5px;background:#3e4242}
.mail{position:relative}
.mail b{position:absolute;left:31px;top:24px;width:24px;height:20px;border-radius:10px;background:#333;border:1px solid #999;font-size:13px;line-height:18px;text-align:center;font-weight:600}
.w{font:bold 12px "Open Sans",sans-serif;fill:#fff}
.tray{margin-left:auto;display:flex;align-items:center;width:392px;font-size:14.070px}
.lang,.clock{display:flex;flex-direction:column;text-align:center;line-height:23px}
.lang{width:40px;margin-left:11px}
.lang span{font-size:14px}
.clock{width:80px;margin-left:9px}
.note{margin-left:21px}
.peek{width:1px;height:50px;background:#667;margin:0 5px 0 auto}
```
